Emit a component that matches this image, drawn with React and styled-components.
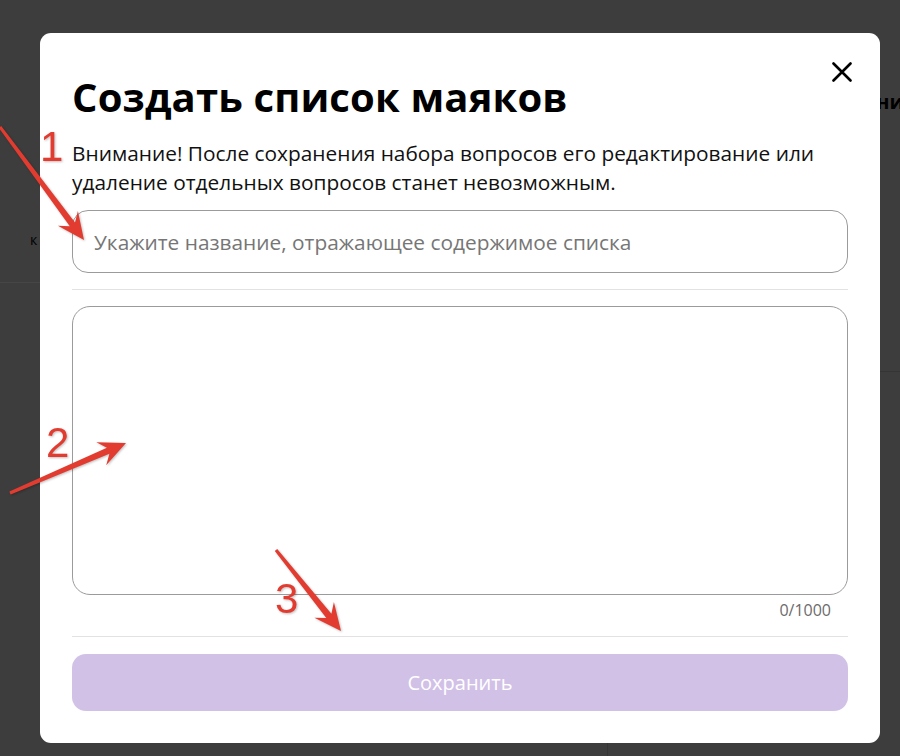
import React, { useState } from 'react'
import styled, { createGlobalStyle } from 'styled-components'

const GlobalStyle = createGlobalStyle`
  html, body {
    margin: 0;
    padding: 0;
    background: #3d3d3d;
    font-family: "Open Sans", "Noto Sans", sans-serif;
  }
  * { box-sizing: border-box; }
`

const Page = styled.div`
  position: relative;
  width: 900px;
  height: 756px;
  overflow: hidden;
  background: #3d3d3d;
`

const Backdrop = styled.div`
  display: grid;
  grid-template-columns: 607px 1fr;
  height: 100%;
`

const BackColumn = styled.div`
  display: flex;
  flex-direction: column;
`

const BackHeader = styled.div`
  height: ${p => p.$height}px;
  flex-shrink: 0;
  border-bottom: 1px solid ${p => p.$line};
  display: flex;
  align-items: flex-start;
  justify-content: ${p => (p.$end ? 'flex-end' : 'flex-start')};
  padding-top: ${p => p.$textTop}px;
  padding-left: ${p => p.$textLeft || 0}px;
  margin-right: ${p => (p.$end ? '-4px' : '0')};
  color: #000;
  font-weight: ${p => p.$weight || 400};
  font-size: ${p => p.$size}px;
  white-space: nowrap;
  overflow: hidden;
`

const BackBody = styled.div`
  flex: 1;
  border-left: ${p => (p.$divided ? '1px solid #353535' : 'none')};
`

const Modal = styled.div`
  position: absolute;
  left: 40px;
  top: 33px;
  width: 840px;
  background: #fff;
  border-radius: 11px;
  padding: 40px 32px 32px;
  display: flex;
  flex-direction: column;
`

const CloseButton = styled.button`
  position: absolute;
  top: 26px;
  right: 25px;
  width: 26px;
  height: 26px;
  padding: 0;
  border: none;
  background: transparent;
  display: flex;
  align-items: center;
  justify-content: center;
  cursor: pointer;
`

const Title = styled.h1`
  margin: 0;
  font-size: 40px;
  line-height: 48px;
  font-weight: 700;
  color: #000;
  letter-spacing: 0.15px;
`

const Warning = styled.p`
  margin: 18px 0 0;
  font-size: 20.85px;
  line-height: 29px;
  color: #111;
`

const NameInput = styled.input`
  margin-top: 13px;
  width: 100%;
  height: 63px;
  border: 1px solid #9b9b9b;
  border-radius: 16px;
  padding: 0 21px;
  font-family: inherit;
  font-size: 20.85px;
  color: #222;
  outline: none;
  &::placeholder { color: #767676; }
`

const Divider = styled.hr`
  margin: ${p => p.$top}px 0 0;
  border: none;
  border-top: 1px solid #e2e2e2;
  height: 0;
`

const Questions = styled.textarea`
  margin-top: 16px;
  width: 100%;
  height: 289px;
  border: 1px solid #9b9b9b;
  border-radius: 18px;
  padding: 18px 21px;
  font-family: inherit;
  font-size: 18px;
  resize: none;
  outline: none;
`

const Counter = styled.div`
  margin-top: 4px;
  padding-right: 17px;
  text-align: right;
  font-size: 16px;
  line-height: 22px;
  color: #6b6b6b;
`

const SaveButton = styled.button`
  margin-top: 17px;
  width: 100%;
  height: 57px;
  border: none;
  border-radius: 14px;
  background: #d2c1e7;
  color: #fff;
  font-family: inherit;
  font-size: 20px;
  font-weight: 500;
  cursor: default;
`

const Annotations = styled.svg`
  position: absolute;
  left: 0;
  top: 0;
  pointer-events: none;
  filter: drop-shadow(1px 1px 1px rgba(0, 0, 0, 0.25));
`

const Mark = styled.text`
  font-family: "Liberation Sans", Arial, sans-serif;
  font-size: 42px;
  fill: #e23c30;
`

const arrows = [
  { from: [0, 127], to: [84, 240] },
  { from: [10, 493], to: [126, 443] },
  { from: [276, 550], to: [341, 631] },
]

const marks = [
  { x: 40, y: 161, label: '1' },
  { x: 46, y: 457, label: '2' },
  { x: 275, y: 613, label: '3' },
]

function arrowPoints([x1, y1], [x2, y2]) {
  const dx = x2 - x1
  const dy = y2 - y1
  const len = Math.hypot(dx, dy)
  const ux = dx / len
  const uy = dy / len
  const nx = -uy
  const ny = ux
  const headLen = 27
  const headW = 25
  const tailW = 3
  const neckW = 6.5
  const neck = [x2 - ux * headLen * 0.72, y2 - uy * headLen * 0.72]
  const barb = [x2 - ux * headLen, y2 - uy * headLen]
  const pts = [
    [x1 + (nx * tailW) / 2, y1 + (ny * tailW) / 2],
    [neck[0] + (nx * neckW) / 2, neck[1] + (ny * neckW) / 2],
    [barb[0] + (nx * headW) / 2, barb[1] + (ny * headW) / 2],
    [x2, y2],
    [barb[0] - (nx * headW) / 2, barb[1] - (ny * headW) / 2],
    [neck[0] - (nx * neckW) / 2, neck[1] - (ny * neckW) / 2],
    [x1 - (nx * tailW) / 2, y1 - (ny * tailW) / 2],
  ]
  return pts.map(p => p.map(v => v.toFixed(1)).join(',')).join(' ')
}

export default function App() {
  const [title, setTitle] = useState('')
  const [text, setText] = useState('')

  return (
    <Page>
      <GlobalStyle />
      <Backdrop>
        <BackColumn>
          <BackHeader $height={283} $line="#464646" $textTop={230} $textLeft={30} $size={14}>
            к
          </BackHeader>
          <BackBody />
        </BackColumn>
        <BackColumn>
          <BackHeader $height={372} $line="#353535" $textTop={88} $size={20} $weight={700} $end>
            Сохранени
          </BackHeader>
          <BackBody $divided />
        </BackColumn>
      </Backdrop>

      <Modal>
        <CloseButton aria-label="Закрыть">
          <svg width="20" height="20" viewBox="0 0 20 20">
            <path d="M1.5 1.5 L18.5 18.5 M18.5 1.5 L1.5 18.5" stroke="#000" strokeWidth="2.6" strokeLinecap="round" />
          </svg>
        </CloseButton>
        <Title>Создать список маяков</Title>
        <Warning>
          Внимание! После сохранения набора вопросов его редактирование или удаление отдельных
          вопросов станет невозможным.
        </Warning>
        <NameInput
          value={title}
          onChange={e => setTitle(e.target.value)}
          placeholder="Укажите название, отражающее содержимое списка"
        />
        <Divider $top={16} />
        <Questions value={text} onChange={e => setText(e.target.value.slice(0, 1000))} />
        <Counter>{text.length}/1000</Counter>
        <Divider $top={15} />
        <SaveButton disabled={!title || !text}>Сохранить</SaveButton>
      </Modal>

      <Annotations width="900" height="756" viewBox="0 0 900 756">
        {arrows.map((a, i) => (
          <polygon key={i} points={arrowPoints(a.from, a.to)} fill="#e23c30" />
        ))}
        {marks.map(m => (
          <Mark key={m.label} x={m.x} y={m.y}>{m.label}</Mark>
        ))}
      </Annotations>
    </Page>
  )
}
